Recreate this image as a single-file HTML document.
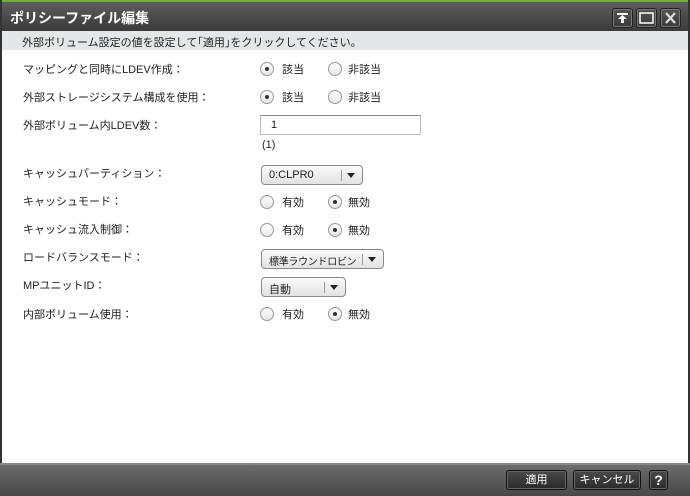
<!DOCTYPE html>
<html><head><meta charset="utf-8"><style>
*{margin:0;padding:0;box-sizing:border-box}
body{width:690px;height:496px;position:relative;overflow:hidden;background:#fff;font-family:"Liberation Sans","Noto Sans CJK JP",sans-serif;font-size:11px;color:#222}
.a{position:absolute}
#title{left:0;top:0;width:690px;height:31px;background:linear-gradient(#5d5d5d,#3a3a3a);border-top:2px solid #6ab52c}
#title span{position:absolute;left:10px;top:6px;color:#fff;font-weight:bold;font-size:14px}
.tb{top:6px;width:21px;height:20px;border:1px solid #222;border-radius:3px;background:linear-gradient(#555,#3a3a3a);box-shadow:inset 0 0 0 1px #777}
#info{left:2px;top:31px;width:686px;height:19px;background:#e4e6ea;padding:3px 0 0 20px}
#lb,#rb{top:0;width:2px;height:496px;background:#333}
#lb{left:0}#rb{right:0}
.lbl{left:23px;top:-1px}
.r{width:14px;height:14px;border:1px solid #9a9a9a;border-radius:50%;background:linear-gradient(#fff,#e6e6e6)}
.r.on::after{content:"";position:absolute;left:4px;top:4px;width:4px;height:4px;border-radius:50%;background:#333}
.dd{height:20px;border:1px solid #8a8a8a;border-radius:4px;background:linear-gradient(#fbfbfb,#e2e2e2);padding:3px 0 0 7px;white-space:nowrap}
.dd span{display:inline-block;overflow:hidden}
.dd i{position:absolute;right:20px;top:4px;width:1px;height:11px;background:#999}
.dd b{position:absolute;right:7px;top:7px;border-left:4px solid transparent;border-right:4px solid transparent;border-top:5px solid #222}
#foot{left:0;top:463px;width:690px;height:33px;background:linear-gradient(#6c6c6c,#474747);border-top:2px solid #888}
.btn{top:470px;height:20px;border:1px solid #111;border-radius:3px;background:linear-gradient(#4a4a4a,#2a2a2a);color:#fff;text-align:center;line-height:18px;box-shadow:inset 0 0 0 1px #666}
</style></head><body>
<div class="a" id="title"><span>ポリシーファイル編集</span>
<div class="a tb" style="left:612px"><svg width="19" height="18" style="position:absolute;left:0;top:0"><rect x="4" y="4" width="11" height="2" fill="#fff"/><path d="M9.5 6 L5 10 H8 V14 H11 V10 H14 Z" fill="#fff"/></svg></div>
<div class="a tb" style="left:636px"><svg width="19" height="18" style="position:absolute;left:0;top:0"><rect x="3" y="4" width="13" height="10" fill="none" stroke="#fff" stroke-width="1.5"/></svg></div>
<div class="a tb" style="left:660px"><svg width="19" height="18" style="position:absolute;left:0;top:0"><path d="M5 4 L14 14 M14 4 L5 14" stroke="#ddd" stroke-width="2.2"/></svg></div>
</div>
<div class="a" id="info">外部ボリューム設定の値を設定して｢適用｣をクリックしてください。</div>
<div class="a" id="lb"></div><div class="a" id="rb"></div>

<div class="a lbl" style="top:61px">マッピングと同時にLDEV作成：</div>
<div class="a r on" style="left:260px;top:62px"></div><div class="a" style="left:282px;top:61px">該当</div>
<div class="a r" style="left:328px;top:62px"></div><div class="a" style="left:348px;top:61px">非該当</div>

<div class="a lbl" style="top:89px">外部ストレージシステム構成を使用：</div>
<div class="a r on" style="left:260px;top:90px"></div><div class="a" style="left:282px;top:89px">該当</div>
<div class="a r" style="left:328px;top:90px"></div><div class="a" style="left:348px;top:89px">非該当</div>

<div class="a lbl" style="top:117px">外部ボリューム内LDEV数：</div>
<div class="a" style="left:260px;top:115px;width:161px;height:20px;border:1px solid #bbb;border-top-color:#888;padding:3px 0 0 10px">1</div>
<div class="a" style="left:262px;top:139px">(1)</div>

<div class="a lbl" style="top:165px">キャッシュパーティション：</div>
<div class="a dd" style="left:261px;top:165px;width:102px"><span>0:CLPR0</span><i></i><b></b></div>

<div class="a lbl" style="top:193px">キャッシュモード：</div>
<div class="a r" style="left:260px;top:195px"></div><div class="a" style="left:282px;top:194px">有効</div>
<div class="a r on" style="left:328px;top:195px"></div><div class="a" style="left:348px;top:194px">無効</div>

<div class="a lbl" style="top:221px">キャッシュ流入制御：</div>
<div class="a r" style="left:260px;top:223px"></div><div class="a" style="left:282px;top:222px">有効</div>
<div class="a r on" style="left:328px;top:223px"></div><div class="a" style="left:348px;top:222px">無効</div>

<div class="a lbl" style="top:249px">ロードバランスモード：</div>
<div class="a dd" style="left:261px;top:249px;width:123px;font-size:10px;letter-spacing:-0.3px"><span style="width:92px">標準ラウンドロビン</span><i></i><b></b></div>

<div class="a lbl" style="top:277px">MPユニットID：</div>
<div class="a dd" style="left:261px;top:277px;width:85px"><span>自動</span><i></i><b></b></div>

<div class="a lbl" style="top:306px">内部ボリューム使用：</div>
<div class="a r" style="left:260px;top:307px"></div><div class="a" style="left:282px;top:306px">有効</div>
<div class="a r on" style="left:328px;top:307px"></div><div class="a" style="left:348px;top:306px">無効</div>

<div class="a" id="foot"></div>
<div class="a btn" style="left:506px;width:61px">適用</div>
<div class="a btn" style="left:573px;width:68px">キャンセル</div>
<div class="a btn" style="left:649px;width:19px;font-weight:bold;font-size:14px">?</div>
</body></html>
